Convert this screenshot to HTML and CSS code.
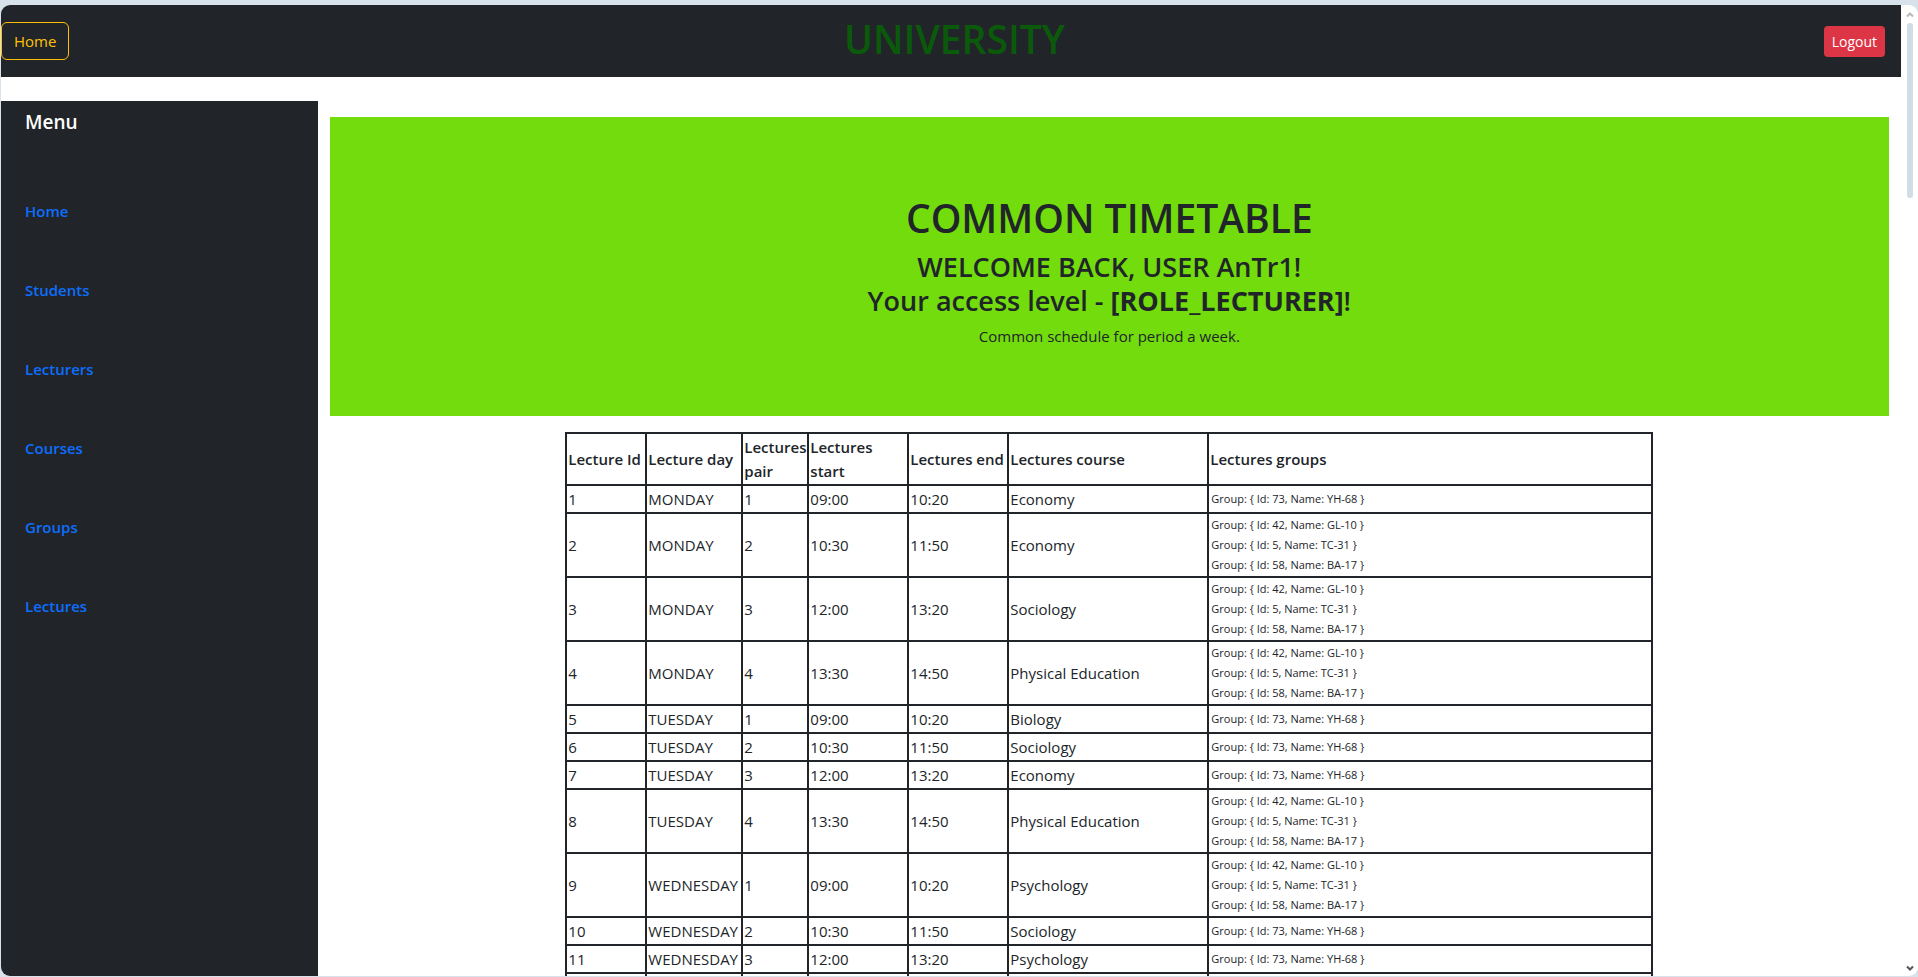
FILE: index.html
```html
<!DOCTYPE html>
<html lang="en">
<head>
<meta charset="utf-8">
<title>University</title>
<link rel="stylesheet" href="styles.css">
</head>
<body>
<div class="window">
  <div class="page">
    <header class="topbar">
      <a class="btn btn-home" href="#">Home</a>
      <h1 class="brand">UNIVERSITY</h1>
      <button class="btn btn-logout" type="button">Logout</button>
    </header>
    <div class="columns">
      <nav class="sidebar">
        <h2 class="menu-title">Menu</h2>
        <ul class="menu">
          <li><a href="#">Home</a></li>
          <li><a href="#">Students</a></li>
          <li><a href="#">Lecturers</a></li>
          <li><a href="#">Courses</a></li>
          <li><a href="#">Groups</a></li>
          <li><a href="#">Lectures</a></li>
        </ul>
      </nav>
      <main class="content">
        <section class="hero">
          <h1>COMMON TIMETABLE</h1>
          <h3>WELCOME BACK, USER AnTr1!<br>Your access level - <b>[ROLE_LECTURER]</b>!</h3>
          <p>Common schedule for period a week.</p>
        </section>
        <table class="timetable">
          <colgroup><col class="c-id"><col class="c-day"><col class="c-pair"><col class="c-time"><col class="c-time"><col class="c-course"><col></colgroup>
          <thead>
            <tr><th>Lecture Id</th><th>Lecture day</th><th>Lectures pair</th><th>Lectures start</th><th>Lectures end</th><th>Lectures course</th><th>Lectures groups</th></tr>
          </thead>
          <tbody>
            <tr><td>1</td><td>MONDAY</td><td>1</td><td>09:00</td><td>10:20</td><td>Economy</td><td><div class="group">Group: { Id: 73, Name: YH-68 }</div></td></tr>
            <tr><td>2</td><td>MONDAY</td><td>2</td><td>10:30</td><td>11:50</td><td>Economy</td><td><div class="group">Group: { Id: 42, Name: GL-10 }</div><div class="group">Group: { Id: 5, Name: TC-31 }</div><div class="group">Group: { Id: 58, Name: BA-17 }</div></td></tr>
            <tr><td>3</td><td>MONDAY</td><td>3</td><td>12:00</td><td>13:20</td><td>Sociology</td><td><div class="group">Group: { Id: 42, Name: GL-10 }</div><div class="group">Group: { Id: 5, Name: TC-31 }</div><div class="group">Group: { Id: 58, Name: BA-17 }</div></td></tr>
            <tr><td>4</td><td>MONDAY</td><td>4</td><td>13:30</td><td>14:50</td><td>Physical Education</td><td><div class="group">Group: { Id: 42, Name: GL-10 }</div><div class="group">Group: { Id: 5, Name: TC-31 }</div><div class="group">Group: { Id: 58, Name: BA-17 }</div></td></tr>
            <tr><td>5</td><td>TUESDAY</td><td>1</td><td>09:00</td><td>10:20</td><td>Biology</td><td><div class="group">Group: { Id: 73, Name: YH-68 }</div></td></tr>
            <tr><td>6</td><td>TUESDAY</td><td>2</td><td>10:30</td><td>11:50</td><td>Sociology</td><td><div class="group">Group: { Id: 73, Name: YH-68 }</div></td></tr>
            <tr><td>7</td><td>TUESDAY</td><td>3</td><td>12:00</td><td>13:20</td><td>Economy</td><td><div class="group">Group: { Id: 73, Name: YH-68 }</div></td></tr>
            <tr><td>8</td><td>TUESDAY</td><td>4</td><td>13:30</td><td>14:50</td><td>Physical Education</td><td><div class="group">Group: { Id: 42, Name: GL-10 }</div><div class="group">Group: { Id: 5, Name: TC-31 }</div><div class="group">Group: { Id: 58, Name: BA-17 }</div></td></tr>
            <tr><td>9</td><td>WEDNESDAY</td><td>1</td><td>09:00</td><td>10:20</td><td>Psychology</td><td><div class="group">Group: { Id: 42, Name: GL-10 }</div><div class="group">Group: { Id: 5, Name: TC-31 }</div><div class="group">Group: { Id: 58, Name: BA-17 }</div></td></tr>
            <tr><td>10</td><td>WEDNESDAY</td><td>2</td><td>10:30</td><td>11:50</td><td>Sociology</td><td><div class="group">Group: { Id: 73, Name: YH-68 }</div></td></tr>
            <tr><td>11</td><td>WEDNESDAY</td><td>3</td><td>12:00</td><td>13:20</td><td>Psychology</td><td><div class="group">Group: { Id: 73, Name: YH-68 }</div></td></tr>
            <tr><td></td><td></td><td></td><td></td><td></td><td></td><td></td></tr>
          </tbody>
        </table>
      </main>
    </div>
  </div>
  <div class="scrollbar" aria-hidden="true">
    <svg width="8" height="7" viewBox="0 0 8 7"><path d="M1 5.5 4 2.5 7 5.5" fill="none" stroke="#b9b9b9" stroke-width="2"/></svg>
    <div class="thumb"></div>
    <svg width="8" height="7" viewBox="0 0 8 7"><path d="M1 1.5 4 4.5 7 1.5" fill="none" stroke="#555" stroke-width="2"/></svg>
  </div>
</div>
</body>
</html>
```

FILE: styles.css
```css
* { box-sizing: border-box; }
body {
  margin: 0;
  height: 100vh;
  padding: 5px 0 1px 1px;
  overflow: hidden;
  background: #d7e2ea;
  color: #212529;
  font-family: "Open Sans", "Noto Sans", sans-serif;
  font-size: 15px;
  line-height: 24px;
}
h1, h2, h3, p, ul { margin: 0; padding: 0; }
h1, h2, h3 { font-weight: 600; }
b { font-weight: 700; }
.window {
  display: flex;
  height: 100%;
  overflow: hidden;
  border-radius: 9px;
  background: #fff;
}
.page { flex: 1; display: flex; flex-direction: column; min-width: 0; }
.topbar {
  flex: none;
  display: flex;
  align-items: center;
  justify-content: space-between;
  padding: 8px 16px 8px 0;
  background: #212529;
}
.btn { font-family: inherit; text-decoration: none; }
.btn-home {
  padding: 6px 12px;
  border: 1px solid #ffc107;
  border-radius: 6px;
  color: #ffc107;
}
.btn-logout {
  padding: 5px 8px;
  border: 0;
  border-radius: 4px;
  background: #dc3545;
  color: #fff;
  font-size: 14px;
  line-height: 21px;
}
.brand {
  margin: 0 0 4px 16px;
  color: #0b5a0b;
  font-size: 39px;
  line-height: 52px;
}
.columns { flex: 1; display: flex; min-height: 0; margin-top: 24px; }
.sidebar {
  flex: none;
  width: 16.6667%;
  padding: 6px 24px;
  background: #212529;
}
.menu-title {
  margin-bottom: 62px;
  color: #fff;
  font-size: 19px;
  line-height: 30px;
}
.menu { list-style: none; display: grid; gap: 55px; }
.menu a { color: #0d6efd; font-weight: 600; text-decoration: none; }
.content { flex: 1; min-width: 0; padding: 16px 12px 0; }
.hero {
  margin-bottom: 16px;
  padding: 77px 16px 68px;
  background: #72dc0d;
  text-align: center;
}
.hero h1 { margin-bottom: 8px; font-size: 39px; line-height: 48px; }
.hero h3 { margin-bottom: 6px; font-size: 27px; line-height: 34px; }
.timetable {
  width: 1088px;
  max-width: 100%;
  margin: 0 auto;
  table-layout: fixed;
  border-collapse: collapse;
}
.timetable th, .timetable td {
  height: 28px;
  padding: 1px;
  border: 2px solid #212529;
  text-align: left;
  white-space: nowrap;
}
.timetable th { white-space: normal; font-weight: 600; }
.c-id { width: 80px; }
.c-day { width: 96px; }
.c-pair { width: 66px; }
.c-time { width: 100px; }
.c-course { width: 200px; }
.group { padding-left: 1px; font-size: 11px; line-height: 20px; }
.scrollbar {
  flex: none;
  width: 17px;
  display: flex;
  flex-direction: column;
  align-items: center;
  padding: 6px 0 4px;
}
.thumb { width: 6px; height: 175px; margin: 5px 0 auto; border-radius: 3px; background: #d1dce4; }
```
